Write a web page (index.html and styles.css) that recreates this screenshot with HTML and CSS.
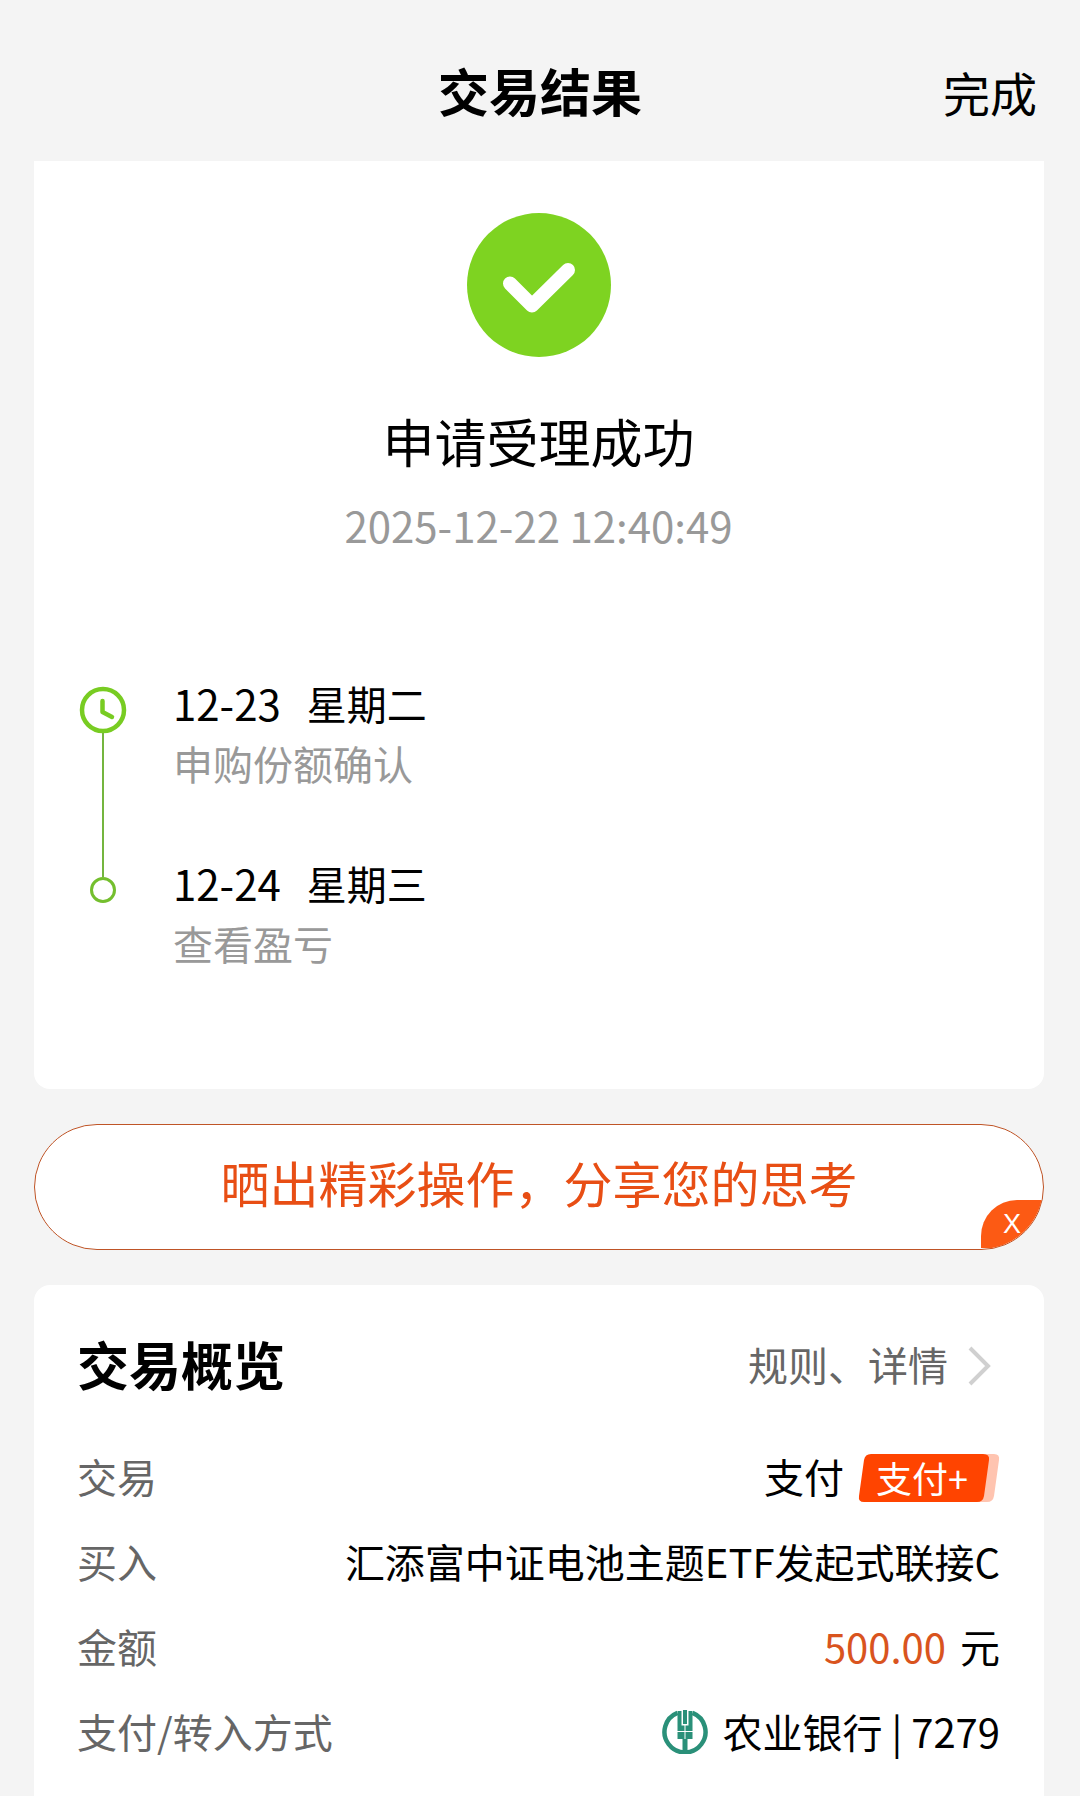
FILE: index.html
```html
<!DOCTYPE html>
<html lang="zh-CN">
<head>
<meta charset="utf-8">
<meta name="viewport" content="width=device-width, initial-scale=1">
<title>交易结果</title>
<link rel="stylesheet" href="styles.css">
</head>
<body>
<header class="topbar">
  <h1 class="topbar-title">交易结果</h1>
  <button class="topbar-done" type="button">完成</button>
</header>
<main class="content">
  <section class="card result">
    <svg class="result-icon" viewBox="0 0 144 144" aria-hidden="true">
      <circle cx="72" cy="72" r="72" fill="#7ed321"/>
      <path d="M43 70.500L65 92.500L101 57" fill="none" stroke="#fff" stroke-width="14" stroke-linecap="round" stroke-linejoin="round"/>
    </svg>
    <h2 class="result-title">申请受理成功</h2>
    <time class="result-time">2025-12-22 12:40:49</time>
    <ol class="timeline">
      <li class="step">
        <div class="rail">
          <svg class="clock" viewBox="0 0 48 48" aria-hidden="true">
            <circle cx="24" cy="24" r="21" fill="none" stroke="#78cc22" stroke-width="4.500"/>
            <path d="M23.500 15V26L33 31" fill="none" stroke="#78cc22" stroke-width="4.500" stroke-linecap="round" stroke-linejoin="round"/>
          </svg>
          <span class="line"></span>
        </div>
        <div class="step-text">
          <p class="step-date"><span class="step-day">12-23</span><span>星期二</span></p>
          <p class="step-note">申购份额确认</p>
        </div>
      </li>
      <li class="step">
        <div class="rail rail-end">
          <span class="dot"></span>
        </div>
        <div class="step-text">
          <p class="step-date"><span class="step-day">12-24</span><span>星期三</span></p>
          <p class="step-note">查看盈亏</p>
        </div>
      </li>
    </ol>
  </section>

  <div class="share">
    <button class="share-main" type="button">晒出精彩操作，分享您的思考</button>
    <button class="share-close" type="button" aria-label="关闭">X</button>
  </div>

  <section class="card overview">
    <div class="overview-head">
      <h2 class="overview-title">交易概览</h2>
      <a class="overview-link" href="#">规则、详情
        <svg class="chevron" viewBox="0 0 24 40" aria-hidden="true"><path d="M2 2L20 20L2 38" fill="none" stroke="#d0d0d0" stroke-width="4"/></svg>
      </a>
    </div>
    <dl class="rows">
      <div class="row">
        <dt>交易</dt>
        <dd>支付
          <span class="badge">
            <svg class="badge-shape" viewBox="0 0 142 48" aria-hidden="true">
              <path d="M18 0H136Q142 0 141 6L136 42Q135 48 129 48H12Z" fill="#ffc4b0"/>
              <path d="M13 0H125Q132 0 131 6L126 42Q125 48 119 48H6Q0 48 1 42L6 6Q7 0 13 0Z" fill="#ff4400"/>
            </svg>
            <span class="badge-text">支付+</span>
          </span>
        </dd>
      </div>
      <div class="row">
        <dt>买入</dt>
        <dd>汇添富中证电池主题ETF发起式联接C</dd>
      </div>
      <div class="row">
        <dt>金额</dt>
        <dd><span class="amount">500.00</span>元</dd>
      </div>
      <div class="row">
        <dt>支付/转入方式</dt>
        <dd>
          <svg class="bank" viewBox="0 0 46 44" aria-hidden="true">
            <path d="M15.500 2.800A20.500 20.500 0 1 0 30.500 2.800" fill="none" stroke="#2a9079" stroke-width="4.500"/>
            <g fill="#2a9079">
              <path d="M21 0H25V14H21ZM15.500 1H19.500V15.500H22.500V21H15.500ZM26.500 1H30.500V21H23.500V15.500H26.500Z"/>
              <path d="M15.500 22H22.500V29H15.500ZM23.500 22H30.500V29H23.500ZM20.500 29H25.500V42H20.500Z"/>
            </g>
          </svg>
          <span>农业银行 | 7279</span>
        </dd>
      </div>
    </dl>
  </section>
</main>
</body>
</html>
```
FILE: styles.css
```css
* {
  box-sizing: border-box;
}

body {
  margin: 0;
  min-height: 100vh;
  display: flex;
  flex-direction: column;
  background: #f4f4f4;
  color: #000;
  font-family: "Noto Sans CJK SC", sans-serif;
  font-size: 40px;
  line-height: 60px;
}

h1, h2, p, ol, dl, dd {
  margin: 0;
  padding: 0;
}

button {
  border: 0;
  padding: 0;
  background: none;
  color: inherit;
  font: inherit;
  cursor: pointer;
}

.topbar {
  display: grid;
  grid-template-columns: 1fr auto 1fr;
  align-items: end;
  padding: 0 43px 33px;
  height: 161px;
}

.topbar-title {
  grid-column: 2;
  font-size: 51px;
  font-weight: 700;
  line-height: 76px;
}

.topbar-done {
  justify-self: end;
  font-size: 47px;
  line-height: 72px;
}

.content {
  flex: 1;
  display: flex;
  flex-direction: column;
  gap: 35px;
  padding: 0 36px 0 34px;
}

.card {
  background: #fff;
  padding: 0 44px 0 43px;
}

.result {
  display: flex;
  flex-direction: column;
  align-items: center;
  padding-top: 52px;
  padding-bottom: 116px;
  border-radius: 0 0 16px 16px;
}

.result-icon {
  width: 144px;
  height: 144px;
}

.result-title {
  margin-top: 48px;
  font-size: 52px;
  font-weight: 400;
  line-height: 72px;
}

.result-time {
  margin-top: 18px;
  font-size: 42px;
  color: #999;
}

.timeline {
  align-self: stretch;
  margin-top: 118px;
  list-style: none;
}

.step {
  display: flex;
  gap: 44px;
}

.step:not(:last-child) .step-text {
  padding-bottom: 60px;
}

.rail {
  width: 52px;
  display: flex;
  flex-direction: column;
  align-items: center;
  padding-top: 13px;
}

.clock {
  width: 48px;
  height: 48px;
  flex: none;
}

.line {
  flex: 1;
  width: 2px;
  margin-top: -1px;
  background: #74b53f;
}

.rail-end {
  padding-top: 0;
}

.rail-end::before {
  content: "";
  width: 2px;
  height: 24px;
  background: #74b53f;
}

.dot {
  width: 26px;
  height: 26px;
  border: 3px solid #74bf2e;
  border-radius: 50%;
}

.step-date {
  display: flex;
  gap: 26px;
}

.step-day {
  font-size: 42px;
}

.step-note {
  color: #999;
}

.share {
  position: relative;
  overflow: hidden;
  border: 1px solid #bf5426;
  border-radius: 63px;
  background: #fff;
}

.share-main {
  display: block;
  width: 100%;
  padding: 21px 0 31px;
  font-size: 49px;
  line-height: 72px;
  color: #e84e14;
}

.share-close {
  position: absolute;
  right: 0;
  bottom: 1px;
  width: 62px;
  height: 48px;
  border-radius: 36px 0 0 0;
  background: #fc5a14;
  color: #fff;
  font-family: "Liberation Sans", sans-serif;
  font-size: 27px;
  line-height: 48px;
}

.overview {
  flex: 1;
  padding-top: 43px;
  padding-bottom: 24px;
  border-radius: 16px 16px 0 0;
}

.overview-head {
  display: flex;
  justify-content: space-between;
  align-items: center;
  margin-bottom: 33px;
}

.overview-title {
  font-size: 52px;
  font-weight: 700;
  line-height: 72px;
}

.overview-link {
  display: flex;
  align-items: center;
  gap: 20px;
  padding-right: 8px;
  color: #666;
  text-decoration: none;
}

.chevron {
  width: 24px;
  height: 40px;
  margin-top: 4px;
}

.row {
  display: flex;
  justify-content: space-between;
  align-items: center;
  height: 85px;
}

.row dt {
  color: #666;
}

.row dd {
  display: flex;
  align-items: center;
  gap: 14px;
}

.badge {
  display: grid;
  width: 142px;
  height: 48px;
  margin-top: 4px;
}

.badge-shape,
.badge-text {
  grid-area: 1 / 1;
}

.badge-text {
  z-index: 1;
  padding-left: 18px;
  font-size: 36px;
  line-height: 46px;
  color: #fff;
}

.amount {
  color: #d9541e;
}

.bank {
  width: 46px;
  height: 44px;
  margin-top: 2px;
}
```
